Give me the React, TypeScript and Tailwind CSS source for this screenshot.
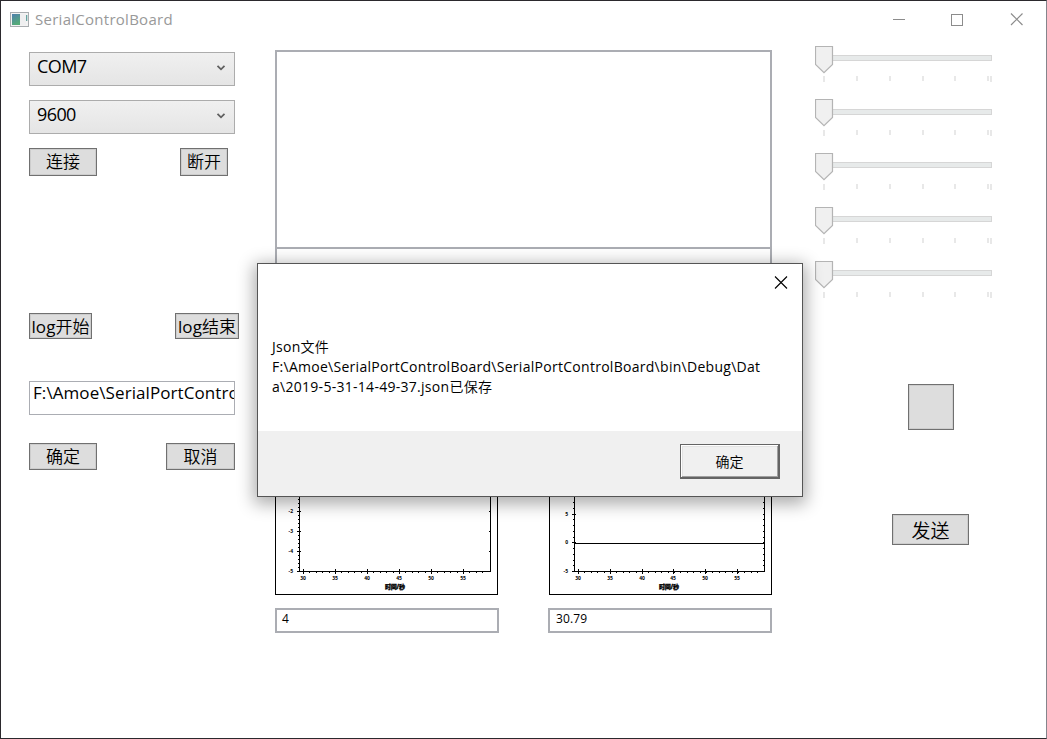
import React from "react";

const FONT = "font-['Open_Sans','Noto_Sans_CJK_SC',sans-serif]";

function Btn({ className = "", children }: { className?: string; children?: React.ReactNode }) {
  return (
    <button
      className={`flex shrink-0 items-center justify-center whitespace-nowrap border border-[#707070] bg-[#dddddd] leading-none shadow-[inset_0_0_0_1px_#cdcdcd] ${className}`}
    >
      {children}
    </button>
  );
}

function Combo({ value, className = "" }: { value: string; className?: string }) {
  return (
    <div
      className={`flex h-[34px] w-[206px] items-start justify-between border border-[#acacac] bg-linear-to-b from-[#f0f0f0] to-[#e5e5e5] pl-[7px] pr-[8px] ${className}`}
    >
      <span className="text-[18px] leading-[26px] tracking-[-0.6px]">{value}</span>
      <svg width="10" height="8" viewBox="0 0 10 8" className="mt-[11px]" fill="none" stroke="#606060" strokeWidth="1.8">
        <path d="M1.5 1.8 L5 5.3 L8.5 1.8" />
      </svg>
    </div>
  );
}

function Slider({ height, track, ticks }: { height: string; track: number; ticks: number }) {
  return (
    <div className={`shrink-0 ${height}`}>
      <svg width="180" height="54" viewBox="0 0 180 54" className="block">
        <rect x="5.5" y={track + 0.5} width="171" height="5" fill="#e7eaea" stroke="#d6d6d6" />
        <path d="M0.5 0.5 H17.5 V18.5 L9 26.7 L0.5 18.5 Z" fill="#f0f0f0" stroke="#b4b4b4" strokeWidth="1.2" />
        {[8, 41, 74, 107, 139, 172].map((x, i) => (
          <rect key={x} x={x} y={ticks} width="2" height={i === 0 ? 6 : 5} fill="#e8e8e8" />
        ))}
        <rect x="175" y={ticks} width="2" height="6" fill="#e8e8e8" />
      </svg>
    </div>
  );
}

type ChartProps = {
  axisX: number;
  right: number;
  labels: [string, number][];
  minor: number;
  xTicks: number[];
  zero?: number;
  titleX: number;
};

function Chart({ axisX, right, labels, minor, xTicks, zero, titleX }: ChartProps) {
  const base = 251;
  const ys = Array.from({ length: 40 }, (_, i) => Math.round(base - i * minor)).filter((y) => y > 14);
  const xs = Array.from({ length: 29 }, (_, i) => Math.round(xTicks[0] + i * 6.4)).filter((x) => x < right);
  return (
    <svg width="223" height="275" viewBox="0 0 223 275" className="block" shapeRendering="crispEdges">
      <rect x="0.5" y="0.5" width="222" height="274" fill="#fff" stroke="#000" />
      <path d={`M${axisX + 0.5} 14 V${base + 0.5} H${right + 0.5} V14`} fill="none" stroke="#000" />
      {zero !== undefined && <path d={`M${axisX} ${zero + 0.5} H${right}`} stroke="#000" />}
      {ys.map((y) => (
        <React.Fragment key={y}>
          <rect x={axisX - 1} y={y} width="2" height="1" />
          <rect x={right - 1} y={y} width="1" height="1" opacity={minor > 5 || (base - y) % 20 === 0 ? 1 : 0} />
        </React.Fragment>
      ))}
      {xs.map((x) => (
        <rect key={x} x={x} y={base + 1} width="1" height="1" />
      ))}
      {labels.map(([t, y]) => (
        <React.Fragment key={t}>
          <rect x={axisX - 2} y={y} width="4" height="1" />
          <text x={axisX - 6} y={y + 2} fontSize="5" fontWeight="700" textAnchor="end">
            {t}
          </text>
        </React.Fragment>
      ))}
      {xTicks.map((x, i) => (
        <React.Fragment key={x}>
          <rect x={x} y={base - 2} width="1" height="5" />
          <text x={x} y={base + 9} fontSize="5" fontWeight="700" textAnchor="middle">
            {30 + i * 5}
          </text>
        </React.Fragment>
      ))}
      <text x={titleX} y="269" fontSize="6" fontWeight="900" textAnchor="middle" textLength="20" stroke="#000" strokeWidth="0.3">
        时间/秒
      </text>
    </svg>
  );
}

export default function App() {
  return (
    <div
      className={`relative flex h-[739px] w-[1047px] flex-col overflow-hidden border border-b-[#2b292d] border-l-[#2b292d] border-r-[#85858c] border-t-[#2b292d] bg-white text-black ${FONT}`}
    >
      <header className="flex h-[37px] shrink-0 items-center pl-[9px] text-[#999999]">
        <svg width="19" height="16" viewBox="0 0 19 16">
          <defs>
            <linearGradient id="pane" x1="0" y1="0" x2="0.4" y2="1">
              <stop offset="0" stopColor="#4f7fae" />
              <stop offset="1" stopColor="#55ab78" />
            </linearGradient>
          </defs>
          <rect x="0.5" y="0.5" width="18" height="14" fill="#f3f3f3" stroke="#a9adb0" />
          <rect x="2" y="2" width="8" height="11" fill="url(#pane)" />
          <rect x="10" y="2" width="6" height="11" fill="#efeff0" />
          <rect x="16" y="3" width="1.3" height="6" fill="#66a3a0" />
        </svg>
        <span className="ml-[6px] text-[15px] leading-none tracking-[0.27px]">SerialControlBoard</span>
        <svg className="ml-auto mr-[23px]" width="130" height="14" viewBox="0 0 130 14" fill="none" stroke="#8c8c8c">
          <path d="M0 6.5 H12" />
          <rect x="58.5" y="1.5" width="11" height="11" />
          <path d="M118 0.5 L129.5 12 M129.5 0.5 L118 12" strokeWidth="1.2" />
        </svg>
      </header>

      <main className="flex flex-1">
        <section className="w-[246px] pl-[28px] pt-[14px]">
          <Combo value="COM7" />
          <Combo value="9600" className="mt-[14px]" />
          <div className="mt-[14px] flex w-[199px] justify-between">
            <Btn className="h-[28px] w-[68px] pb-px text-[17px] font-[350]">连接</Btn>
            <Btn className="h-[28px] w-[48px] pb-px text-[17px] font-[350]">断开</Btn>
          </div>
          <div className="mt-[137px] flex w-[210px] justify-between">
            <Btn className="h-[26px] w-[63px] pt-px text-[17px]">
              <span className="tracking-[0.1px]">log</span>
              <span className="font-[350]">开始</span>
            </Btn>
            <Btn className="h-[26px] w-[64px] pt-px text-[17px]">
              <span className="tracking-[0.1px]">log</span>
              <span className="font-[350]">结束</span>
            </Btn>
          </div>
          <div className="mt-[42px] h-[34px] w-[206px] overflow-hidden whitespace-nowrap border border-[#abadb3] pl-[3px] text-[17px] leading-[22px] tracking-[0.08px]">
            F:\Amoe\SerialPortControlBoard
          </div>
          <div className="mt-[28px] flex w-[206px] justify-between">
            <Btn className="h-[27px] w-[68px] text-[17px] font-[350]">确定</Btn>
            <Btn className="h-[27px] w-[69px] text-[17px] font-[350]">取消</Btn>
          </div>
        </section>

        <section className="ml-[28px] w-[497px] pt-[12px]">
          <div className="h-[199px] border-2 border-[#abadb3]" />
          <div className="-mt-[2px] h-[60px] border-2 border-[#abadb3]" />
          <div className="mt-[13px] flex justify-between">
            <Chart
              axisX={24}
              right={215}
              minor={4}
              xTicks={[28, 60, 92, 124, 156, 188]}
              labels={[["-2", 191], ["-3", 211], ["-4", 231], ["-5", 251]]}
              titleX={120}
            />
            <Chart
              axisX={25}
              right={215}
              minor={5.75}
              zero={223}
              xTicks={[29, 61, 93, 124, 156, 188]}
              labels={[["5", 194], ["0", 222], ["-5", 251]]}
              titleX={120}
            />
          </div>
          <div className="mt-[13px] flex justify-between text-[12px] leading-[17px] tracking-[0.15px]">
            <div className="h-[25px] w-[224px] border-2 border-[#abadb3] pl-[5px]">4</div>
            <div className="h-[25px] w-[224px] border-2 border-[#abadb3] pl-[6px]">30.79</div>
          </div>
        </section>

        <section className="ml-[43px] flex w-[231px] flex-col pt-[8px]">
          <Slider height="h-[53px]" track={9} ticks={30} />
          <Slider height="h-[54px]" track={10} ticks={31} />
          <Slider height="h-[54px]" track={9} ticks={31} />
          <Slider height="h-[54px]" track={9} ticks={31} />
          <Slider height="h-[54px]" track={9} ticks={31} />
          <Btn className="ml-[93px] mt-[69px] h-[46px] w-[46px]" />
          <Btn className="ml-[77px] mt-[84px] h-[31px] w-[77px] pt-[3px] text-[19px] font-[350]">发送</Btn>
        </section>
      </main>

      <div className="absolute -top-px right-0 h-px w-[191px] bg-[#92929c]" />
      <div className="absolute -bottom-px right-0 h-px w-[150px] bg-[#92929c]" />

      <div
        role="dialog"
        className="absolute left-[256px] top-[262px] flex h-[234px] w-[546px] flex-col border border-[#555555] bg-white shadow-[0_4px_16px_3px_rgba(0,0,0,0.33)]"
      >
        <svg className="ml-auto mr-[14px] mt-[12px]" width="14" height="13" viewBox="0 0 14 13" stroke="#000" strokeWidth="1.1">
          <path d="M1 0.5 L13 12.5 M13 0.5 L1 12.5" />
        </svg>
        <div className="mt-[48px] pl-[14px] text-[14px] leading-[20px] tracking-[0.28px]">
          <p>
            Json<span className="font-[350]">文件</span>
          </p>
          <p>F:\Amoe\SerialPortControlBoard\SerialPortControlBoard\bin\Debug\Dat</p>
          <p>
            a\2019-5-31-14-49-37.json<span className="font-[350]">已保存</span>
          </p>
        </div>
        <footer className="mt-auto flex h-[65px] justify-end bg-[#f0f0f0] pr-[22px] pt-[13px]">
          <button className="flex h-[35px] w-[100px] items-center justify-center border border-b-2 border-r-2 border-[#646464] bg-[#f0f0f0] pt-[2px] text-[14px] font-[350] leading-none shadow-[inset_1px_1px_0_#fff,inset_-1px_-1px_0_#a0a0a0,inset_2px_2px_0_#e3e3e3]">
            确定
          </button>
        </footer>
      </div>
    </div>
  );
}
